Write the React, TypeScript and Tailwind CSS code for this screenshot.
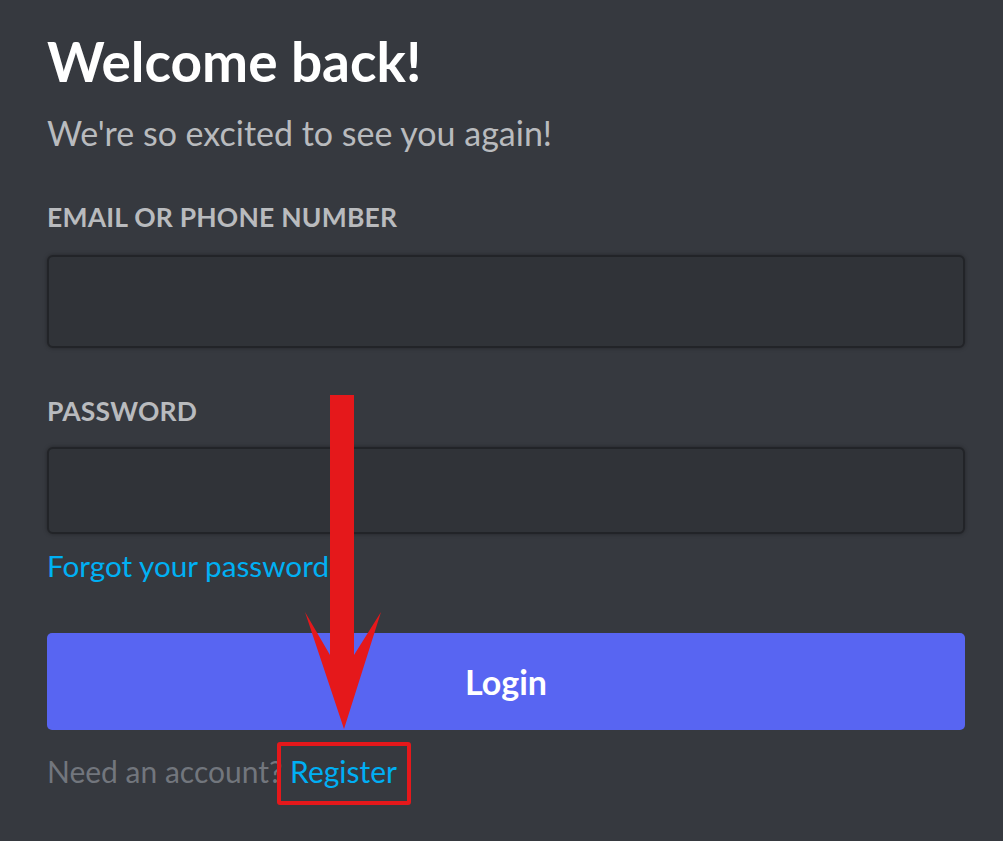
const Field = ({ label, h, gap }: { label: string; h: string; gap: string }) => (
  <div className="flex flex-col">
    <label className="text-[26.5px] font-bold tracking-[0.2px] text-[#b9bbbe] leading-none">{label}</label>
    <div className={`${gap} ${h} w-full rounded-[6px] border-2 border-[#222428] bg-[#303338] shadow-[0_0_4px_rgba(0,0,0,0.35)]`} />
  </div>
);

export default function App() {
  return (
    <div className="relative h-[841px] w-[1003px] overflow-hidden bg-[#36393f] font-['Lato',sans-serif]">
      <div className="flex flex-col pl-[47px] pr-[38px] pt-[30px]">
        <h1 className="text-[55px] font-bold leading-[62px] text-white">Welcome back!</h1>
        <p className="mt-[21px] text-[34px] leading-[40px] text-[#b9bbbe]">We're so excited to see you again!</p>

        <div className="mt-[51px]">
          <Field label="EMAIL OR PHONE NUMBER" h="h-[93px]" gap="mt-[24px]" />
        </div>
        <div className="mt-[50px]">
          <Field label="PASSWORD" h="h-[87px]" gap="mt-[23px]" />
        </div>

        <a className="mt-[14px] text-[29.7px] leading-[36px] text-[#00b0f4]">Forgot your password</a>

        <button className="mt-[49px] h-[97px] w-full rounded-[5px] bg-[#5865f2] text-[34px] font-bold text-white">
          Login
        </button>

        <p className="mt-[23px] text-[30px] leading-[36px] text-[#72767d]">
          Need an account?{" "}
          <span className="relative text-[#00aff4]">
            Register
            <span className="absolute -bottom-[16px] -left-[13px] -right-[14px] -top-[11px] rounded-[3px] border-[4px] border-[#e5181b]" />
          </span>
        </p>
      </div>

      <svg className="absolute left-0 top-0" width="1003" height="841" viewBox="0 0 1003 841">
        <path d="M330 395 L354 395 L354 655 L381 612 L344 729 L305 612 L330 655 Z" fill="#e5181b" />
      </svg>
    </div>
  );
}
